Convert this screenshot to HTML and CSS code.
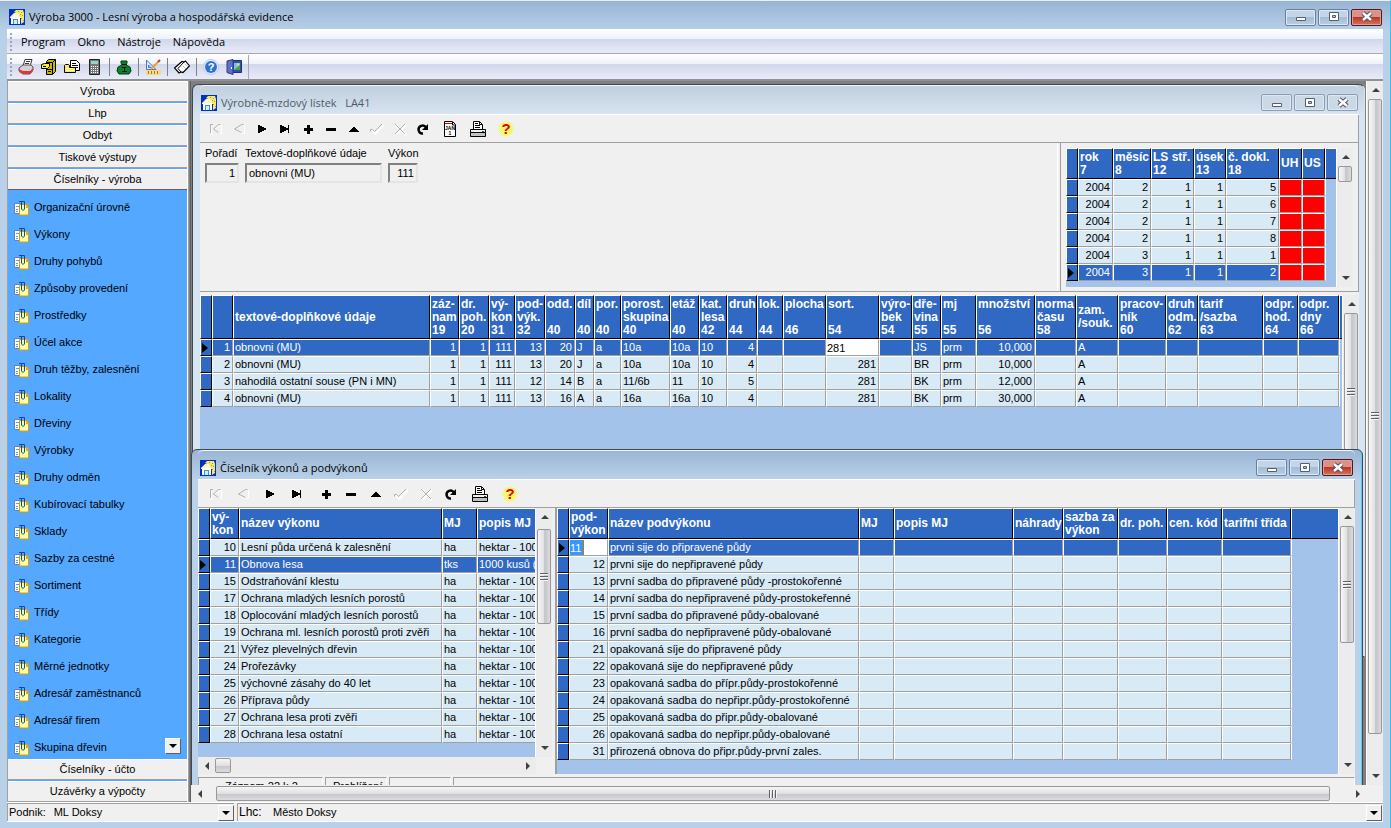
FILE: index.html
```html
<!DOCTYPE html>
<html lang="cs">

<head>
    <meta charset="UTF-8">
    <meta name="viewport" content="width=device-width, initial-scale=1.0">
    <title>Výroba 3000 - Lesní výroba a hospodářská evidence</title>

    <link rel="stylesheet" href="styles.css">
</head>

<body>

    <!-- Icon set -->
    <svg class="sprite" aria-hidden="true">
        <defs>
            <pattern id="dither" width="2" height="2" patternUnits="userSpaceOnUse"><path d="M0 0h1v1H0zM1 1h1v1H1z" fill="#ffff00"/></pattern>
        </defs>
        <symbol id="i-app" viewBox="0 0 16 16"><rect width="16" height="16" fill="#0030c0"/><path d="M5 3l2-2h7l1 3v9l-3 2V8L9 5z" fill="#f4e870"/><path d="M9 2h1v1H9zM12 3h1v1h-1zM13 6h1v1h-1zM12 9h1v1h-1zM14 11h1v1h-1zM11 5h1v1h-1z" fill="#b09820"/><path d="M1 8l4-4h4l3 4v1H1z" fill="#fff8c0"/><path d="M2 8h9v7H2z" fill="#fff"/><path d="M4 10h5v5H4z" fill="#4890c0"/><path d="M5 11h3v4H5z" fill="#c8f0f0"/></symbol>
        <symbol id="i-first" viewBox="0 0 16 16"><path d="M3.500 5v8h2M13.500 13V4L6 8.500z" fill="none" stroke="#fff"/><path d="M5 3.500H2.500V12M12.500 3.500h-2L5.500 8l5 3.500" fill="none" stroke="#b0b0b0"/></symbol>
        <symbol id="i-prev" viewBox="0 0 16 16"><path d="M13.500 4v8.500h-2L5 9" fill="none" stroke="#fff"/><path d="M12.500 3.500h-2L3.500 8l7 3.500" fill="none" stroke="#b0b0b0"/></symbol>
        <symbol id="i-next" viewBox="0 0 16 16"><path d="M4 4h2v1h2v1h2v1h2v2h-2v1H8v1H6v1H4z"/></symbol>
        <symbol id="i-last" viewBox="0 0 16 16"><path d="M3 4h2v1h2v1h2v1h2V4h1v8h-1V9H9v1H7v1H5v1H3z"/></symbol>
        <symbol id="i-add" viewBox="0 0 16 16"><path d="M7 4h3v3h3v3h-3v3H7v-3H4V7h3z"/></symbol>
        <symbol id="i-del" viewBox="0 0 16 16"><path d="M3 7h10v3H3z"/></symbol>
        <symbol id="i-edit" viewBox="0 0 16 16"><path d="M7 6h2v1h1v1h1v1h1v1h1v1H3v-1h1V9h1V8h1V7h1z"/></symbol>
        <symbol id="i-post" viewBox="0 0 16 16"><path d="M3 9l3 4 9-9" fill="none" stroke="#fff" stroke-width="2"/><path d="M1.500 10.500v-2h2l2 2L13 3" fill="none" stroke="#b0b0b0"/></symbol>
        <symbol id="i-cancel" viewBox="0 0 16 16"><path d="M4 4l10 10M14 4L4 14" stroke="#fff" stroke-width="2"/><path d="M3 3l10 10M13 3L3 13" stroke="#b0b0b0"/></symbol>
        <symbol id="i-refresh" viewBox="0 0 16 16"><path d="M11 6.500A4 4 0 1 0 8 12.500" fill="none" stroke="#000" stroke-width="2.400"/><path d="M13 3v6H7z"/></symbol>
        <symbol id="i-cal" viewBox="0 0 16 16"><path d="M2.500.5h8l3 3v12h-11z" fill="#fff" stroke="#000"/><path d="M3 2h8v1H3z" fill="#e00000"/><path d="M10.500 1v3h3" fill="none" stroke="#000"/><text class="month" x="8" y="9">JAN</text><text class="month" x="8" y="14">1</text></symbol>
        <symbol id="i-print" viewBox="0 0 16 16"><path d="M3.500 8.500v-8h6l3 3v5z" fill="#fff" stroke="#000"/><path d="M5 2.500h3M5 4.500h5M5 6.500h5M9.500 1v2.500H12" fill="none" stroke="#000"/><path d="M.5 8.500h15v3H.5z" fill="#f0f0f0" stroke="#000"/><path d="M.5 11.500h15v4H.5z" fill="#c0c0c0" stroke="#000"/><path d="M12 10.500h2" stroke="#008000"/></symbol>
        <symbol id="i-help" viewBox="0 0 16 16"><circle cx="8" cy="8" r="7.500" fill="url(#dither)"/><text class="question" x="8" y="13">?</text></symbol>
        <symbol id="i-paper" viewBox="0 0 16 16"><path d="M.5 3.500h8v10h-8z" fill="#fff" stroke="#6080c0"/><path d="M2 6.500h3M2 9.500h2M2 11.500h2" stroke="#5f9fe0"/><path d="M5.500 4.500h7l2 3v7.500h-9z" fill="#ffffa0" stroke="#d8a000"/><path d="M12 4h1l2 3v1h-3z" fill="#f0a800"/><path d="M5 1.500h5.500V9L9 10.500 7.500 9V2" fill="none" stroke="#1048a8"/></symbol>
        <symbol id="i-redprint" viewBox="0 0 16 16"><path d="M5 7l2-6.500h7l-2 7z" fill="#fff" stroke="#333"/><path d="M8 2.500h4M7 4.500h4" stroke="#333"/><path d="M1 9l4-3h8l2 2v3l-3 4H5l-4-3z" fill="#d8d0d0" stroke="#555"/><path d="M1 10l4 2h7l3-3v3l-3 3H5l-4-2z" fill="#e03838"/></symbol>
        <symbol id="i-cabinet" viewBox="0 0 16 16"><path d="M5.500 2.500l2-2h7v12l-3 3h-6z" fill="#c8b800" stroke="#000"/><path d="M5 3.500h6.500V15M6 10.500h5M7 12.500h3M11.500 3.500l3-3" fill="none" stroke="#000"/><path d="M.5 5.500l3-1h5v3l-2 2h-6z" fill="#ffec30" stroke="#000"/><path d="M2 7.500h3" stroke="#000"/></symbol>
        <symbol id="i-open" viewBox="0 0 16 16"><path d="M6.500 1.500h6l3 3v7h-9z" fill="#fff" stroke="#000"/><path d="M8 4.500h4M8 6.500h6M9 8.500h5" stroke="#000"/><path d="M.5 13.500v-7l1-1h3l1 1v2h6v5z" fill="#ffe850" stroke="#000"/><path d="M2 9.500h7M2 11.500h8" stroke="#fffbd0"/></symbol>
        <symbol id="i-calc" viewBox="0 0 16 16"><path d="M2.500.5h10v15h-10z" fill="#777" stroke="#222"/><path d="M4 2h7v3H4z" fill="#90d8c8"/><path d="M4 7h1v1H4zM6 7h1v1H6zM8 7h1v1H8zM10 7h1v1h-1zM4 9h1v1H4zM6 9h1v1H6zM8 9h1v1H8zM10 9h1v1h-1zM4 11h1v1H4zM6 11h1v1H6zM8 11h1v1H8zM10 11h1v1h-1zM4 13h1v1H4zM6 13h1v1H6zM8 13h1v1H8zM10 13h1v1h-1z" fill="#fff"/></symbol>
        <symbol id="i-money" viewBox="0 0 16 16"><path d="M5 2h6v2l-1 2 4 2 1 4-2 3H3l-2-3 1-4 4-2-1-2z" fill="#088030" stroke="#003810"/><path d="M6 5.500h5M6 8.500h4M8.500 8v4M6 12.500h5" stroke="#001800"/></symbol>
        <symbol id="i-ruler" viewBox="0 0 16 16"><path d="M1.500 1v9.500H11z" fill="#d8e8ff" stroke="#4878c8"/><path d="M3.500 6v2.500H6z" fill="#fff" stroke="#4878c8"/><path d="M1 11h15v5H1z" fill="#f8d880"/><path d="M3.500 12v3M6.500 12v3M9.500 12v3M12.500 12v3" stroke="#b07820"/><path d="M6 10l8-8" stroke="#f0a020" stroke-width="2"/><path d="M13 3l2-2" stroke="#c04040" stroke-width="2"/></symbol>
        <symbol id="i-book" viewBox="0 0 16 16"><path d="M.5 9L8 2.500l2 .5 1.500-1 4 5L9 13.500 7 13l-2 1z" fill="#fff" stroke="#000" stroke-width="1.200"/><path d="M10 3l-6 6.500 3 3.500" fill="none" stroke="#000"/><path d="M11 5l3 3M9 7l3 3" stroke="#c0c0c0"/></symbol>
        <symbol id="i-info" viewBox="0 0 16 16"><circle cx="8" cy="8" r="7.500" fill="#e4eefc" stroke="#b8cce8"/><circle cx="8" cy="8" r="6" fill="#3070d0"/><text class="info" x="8" y="12">?</text></symbol>
        <symbol id="i-exit" viewBox="0 0 16 16"><path d="M6 1.500h9.500v12H6z" fill="#3050b0" stroke="#203070"/><path d="M8 4h6v7H8z" fill="#70c0f0"/><path d="M8 11l6-5v5z" fill="#50a040"/><circle cx="12" cy="5.500" r="1.300" fill="#ffd040"/><path d="M1 2l6-1.500v15l-6-2z" fill="#6070c8" stroke="#303880"/><path d="M5 8h1v2H5z" fill="#fff"/></symbol>
        <symbol id="i-min" viewBox="0 0 16 16"><path d="M3.500 8.500h9v3h-9z" fill="#fff" stroke="#555f70"/></symbol>
        <symbol id="i-max" viewBox="0 0 16 16"><path d="M3.500 3.500h9v8h-9z" fill="#fff" stroke="#555f70"/><path d="M6.500 6.500h3v2h-3z" fill="#b0c4dc" stroke="#555f70"/></symbol>
        <symbol id="i-close" viewBox="0 0 16 16"><path d="M4 4l8 7M12 4l-8 7" stroke="#555060" stroke-width="4.500"/><path d="M4 4l8 7M12 4l-8 7" stroke="#fff" stroke-width="2.400"/></symbol>
    </svg>

    <div class="app">

        <header class="titlebar">
            <svg class="icon"><use href="#i-app"/></svg>
            <h1>Výroba 3000 - Lesní výroba a hospodářská evidence</h1>
            <div class="winbtns">
                <button type="button" aria-label="Minimalizovat"><svg class="icon"><use href="#i-min"/></svg></button>
                <button type="button" aria-label="Maximalizovat"><svg class="icon"><use href="#i-max"/></svg></button>
                <button type="button" class="close" aria-label="Zavřít"><svg class="icon"><use href="#i-close"/></svg></button>
            </div>
        </header>

        <nav class="band menu">
            <span class="grip"></span>
            <button type="button">Program</button>
            <button type="button">Okno</button>
            <button type="button">Nástroje</button>
            <button type="button">Nápověda</button>
        </nav>

        <div class="band tools">
            <span class="grip"></span>
            <div class="tool-group">
                <button type="button" aria-label="Tisk"><svg class="icon"><use href="#i-redprint"/></svg></button>
                <button type="button" aria-label="Archiv"><svg class="icon"><use href="#i-cabinet"/></svg></button>
                <button type="button" aria-label="Otevřít"><svg class="icon"><use href="#i-open"/></svg></button>
                <button type="button" aria-label="Kalkulačka"><svg class="icon"><use href="#i-calc"/></svg></button>
            </div>
            <div class="tool-group"><button type="button" aria-label="Mzdy"><svg class="icon"><use href="#i-money"/></svg></button></div>
            <div class="tool-group"><button type="button" aria-label="Nastavení"><svg class="icon"><use href="#i-ruler"/></svg></button></div>
            <div class="tool-group"><button type="button" aria-label="Kniha"><svg class="icon"><use href="#i-book"/></svg></button></div>
            <div class="tool-group">
                <button type="button" aria-label="Nápověda"><svg class="icon"><use href="#i-info"/></svg></button>
                <button type="button" aria-label="Konec"><svg class="icon"><use href="#i-exit"/></svg></button>
            </div>
        </div>

        <main class="work">

            <!-- Outlook style sidebar -->
            <aside class="sidebar">
                <button type="button" class="group">Výroba</button>
                <button type="button" class="group">Lhp</button>
                <button type="button" class="group">Odbyt</button>
                <button type="button" class="group">Tiskové výstupy</button>
                <button type="button" class="group open">Číselníky - výroba</button>
                <ul class="items">
                    <li><a href="#"><svg class="icon"><use href="#i-paper"/></svg>Organizační úrovně</a></li>
                    <li><a href="#"><svg class="icon"><use href="#i-paper"/></svg>Výkony</a></li>
                    <li><a href="#"><svg class="icon"><use href="#i-paper"/></svg>Druhy pohybů</a></li>
                    <li><a href="#"><svg class="icon"><use href="#i-paper"/></svg>Způsoby provedení</a></li>
                    <li><a href="#"><svg class="icon"><use href="#i-paper"/></svg>Prostředky</a></li>
                    <li><a href="#"><svg class="icon"><use href="#i-paper"/></svg>Účel akce</a></li>
                    <li><a href="#"><svg class="icon"><use href="#i-paper"/></svg>Druh těžby, zalesnění</a></li>
                    <li><a href="#"><svg class="icon"><use href="#i-paper"/></svg>Lokality</a></li>
                    <li><a href="#"><svg class="icon"><use href="#i-paper"/></svg>Dřeviny</a></li>
                    <li><a href="#"><svg class="icon"><use href="#i-paper"/></svg>Výrobky</a></li>
                    <li><a href="#"><svg class="icon"><use href="#i-paper"/></svg>Druhy odměn</a></li>
                    <li><a href="#"><svg class="icon"><use href="#i-paper"/></svg>Kubírovací tabulky</a></li>
                    <li><a href="#"><svg class="icon"><use href="#i-paper"/></svg>Sklady</a></li>
                    <li><a href="#"><svg class="icon"><use href="#i-paper"/></svg>Sazby za cestné</a></li>
                    <li><a href="#"><svg class="icon"><use href="#i-paper"/></svg>Sortiment</a></li>
                    <li><a href="#"><svg class="icon"><use href="#i-paper"/></svg>Třídy</a></li>
                    <li><a href="#"><svg class="icon"><use href="#i-paper"/></svg>Kategorie</a></li>
                    <li><a href="#"><svg class="icon"><use href="#i-paper"/></svg>Měrné jednotky</a></li>
                    <li><a href="#"><svg class="icon"><use href="#i-paper"/></svg>Adresář zaměstnanců</a></li>
                    <li><a href="#"><svg class="icon"><use href="#i-paper"/></svg>Adresář firem</a></li>
                    <li><a href="#"><svg class="icon"><use href="#i-paper"/></svg>Skupina dřevin</a>
                        <button type="button" class="drop" aria-label="Další položky"></button></li>
                </ul>
                <button type="button" class="group">Číselníky - účto</button>
                <button type="button" class="group">Uzávěrky a výpočty</button>
            </aside>
            <div class="splitter"></div>

            <div class="mdi">
                <div class="desktop">

                    <!-- Window: wage sheet -->
                    <section class="window sheet">
                        <header class="caption">
                            <svg class="icon"><use href="#i-app"/></svg>
                            <h2>Výrobně-mzdový lístek &nbsp; LA41</h2>
                            <div class="winbtns">
                                <button type="button" aria-label="Minimalizovat"><svg class="icon"><use href="#i-min"/></svg></button>
                                <button type="button" aria-label="Maximalizovat"><svg class="icon"><use href="#i-max"/></svg></button>
                                <button type="button" aria-label="Zavřít"><svg class="icon"><use href="#i-close"/></svg></button>
                            </div>
                        </header>
                        <div class="client">
                            <div class="navigator">
                                <div class="nav-move">
                                    <button type="button" aria-label="První" disabled><svg class="icon"><use href="#i-first"/></svg></button>
                                    <button type="button" aria-label="Předchozí" disabled><svg class="icon"><use href="#i-prev"/></svg></button>
                                    <button type="button" aria-label="Další"><svg class="icon"><use href="#i-next"/></svg></button>
                                    <button type="button" aria-label="Poslední"><svg class="icon"><use href="#i-last"/></svg></button>
                                </div>
                                <div class="nav-edit">
                                    <button type="button" aria-label="Přidat"><svg class="icon"><use href="#i-add"/></svg></button>
                                    <button type="button" aria-label="Smazat"><svg class="icon"><use href="#i-del"/></svg></button>
                                    <button type="button" aria-label="Upravit"><svg class="icon"><use href="#i-edit"/></svg></button>
                                    <button type="button" aria-label="Uložit" disabled><svg class="icon"><use href="#i-post"/></svg></button>
                                    <button type="button" aria-label="Zrušit" disabled><svg class="icon"><use href="#i-cancel"/></svg></button>
                                    <button type="button" aria-label="Obnovit"><svg class="icon"><use href="#i-refresh"/></svg></button>
                                </div>
                                <div class="nav-extra">
                                    <button type="button" aria-label="Kalendář"><svg class="icon"><use href="#i-cal"/></svg></button>
                                    <button type="button" aria-label="Tisk"><svg class="icon"><use href="#i-print"/></svg></button>
                                    <button type="button" aria-label="Nápověda"><svg class="icon"><use href="#i-help"/></svg></button>
                                </div>
                            </div>

                            <div class="top">
                                <form class="fields">
                                    <div class="field order">
                                        <label for="poradi">Pořadí</label>
                                        <input id="poradi" value="1" readonly>
                                    </div>
                                    <div class="field note">
                                        <label for="udaje">Textové-doplňkové údaje</label>
                                        <input id="udaje" value="obnovni (MU)" readonly>
                                    </div>
                                    <div class="field task">
                                        <label for="vykon">Výkon</label>
                                        <input id="vykon" value="111" readonly>
                                    </div>
                                </form>
                                <div class="docs">
                                    <div class="grid-area">
                                        <table class="grid doc-grid">
                                            <colgroup><col><col><col><col><col><col><col><col><col></colgroup>
                                            <thead><tr><th></th><th>rok<br>7</th><th>měsíc<br>8</th><th>LS stř.<br>12</th><th>úsek<br>13</th><th>č. dokl.<br>18</th><th>UH</th><th>US</th><th></th></tr></thead>
                                            <tbody>
                                                <tr><td></td><td>2004</td><td>2</td><td>1</td><td>1</td><td>5</td><td class="red"></td><td class="red"></td><td></td></tr>
                                                <tr><td></td><td>2004</td><td>2</td><td>1</td><td>1</td><td>6</td><td class="red"></td><td class="red"></td><td></td></tr>
                                                <tr><td></td><td>2004</td><td>2</td><td>1</td><td>1</td><td>7</td><td class="red"></td><td class="red"></td><td></td></tr>
                                                <tr><td></td><td>2004</td><td>2</td><td>1</td><td>1</td><td>8</td><td class="red"></td><td class="red"></td><td></td></tr>
                                                <tr><td></td><td>2004</td><td>3</td><td>1</td><td>1</td><td>1</td><td class="red"></td><td class="red"></td><td></td></tr>
                                                <tr class="sel"><td></td><td>2004</td><td>3</td><td>1</td><td>1</td><td>2</td><td class="red"></td><td class="red"></td><td></td></tr>
                                            </tbody>
                                        </table>
                                    </div>
                                    <div class="scroll v docs-scroll"><i class="arrow up"></i><span class="track"><span class="thumb"></span></span><i class="arrow down"></i></div>
                                </div>
                            </div>

                            <div class="bottom">
                                <div class="grid-area">
                                    <table class="grid main-grid">
                                        <colgroup><col><col><col><col><col><col><col><col><col><col><col><col><col><col><col><col><col><col><col><col><col><col><col><col><col><col><col><col><col></colgroup>
                                        <thead><tr>
                                            <th></th><th></th><th>textové-doplňkové údaje</th>
                                            <th>záz-<br>nam<br>19</th><th>dr.<br>poh.<br>20</th><th>vý-<br>kon<br>31</th><th>pod-<br>výk.<br>32</th>
                                            <th>odd.<br><br>40</th><th>díl<br><br>40</th><th>por.<br><br>40</th><th>porost.<br>skupina<br>40</th>
                                            <th>etáž<br><br>40</th><th>kat.<br>lesa<br>42</th><th>druh<br><br>44</th><th>lok.<br><br>44</th>
                                            <th>plocha<br><br>46</th><th>sort.<br><br>54</th><th>výro-<br>bek<br>54</th><th>dře-<br>vina<br>55</th>
                                            <th>mj<br><br>55</th><th>množství<br><br>56</th><th>norma<br>času<br>58</th><th>zam.<br>/souk.</th>
                                            <th>pracov-<br>ník<br>60</th><th>druh<br>odm.<br>62</th><th>tarif<br>/sazba<br>63</th>
                                            <th>odpr.<br>hod.<br>64</th><th>odpr.<br>dny<br>66</th><th></th>
                                        </tr></thead>
                                        <tbody>
                                            <tr class="sel"><td></td><td class="n">1</td><td>obnovni (MU)</td><td class="n">1</td><td class="n">1</td><td class="n">111</td><td class="n">13</td><td class="n">20</td><td>J</td><td>a</td><td>10a</td><td>10a</td><td>10</td><td class="n">4</td><td></td><td></td><td class="edit"><input value="281" aria-label="Sortiment"></td><td></td><td>JS</td><td>prm</td><td class="n">10,000</td><td></td><td>A</td><td></td><td></td><td></td><td></td><td></td><td></td></tr>
                                            <tr><td></td><td class="n">2</td><td>obnovni (MU)</td><td class="n">1</td><td class="n">1</td><td class="n">111</td><td class="n">13</td><td class="n">20</td><td>J</td><td>a</td><td>10a</td><td>10a</td><td>10</td><td class="n">4</td><td></td><td></td><td class="n">281</td><td></td><td>BR</td><td>prm</td><td class="n">10,000</td><td></td><td>A</td><td></td><td></td><td></td><td></td><td></td><td></td></tr>
                                            <tr><td></td><td class="n">3</td><td>nahodilá ostatní souse (PN i MN)</td><td class="n">1</td><td class="n">1</td><td class="n">111</td><td class="n">12</td><td class="n">14</td><td>B</td><td>a</td><td>11/6b</td><td>11</td><td>10</td><td class="n">5</td><td></td><td></td><td class="n">281</td><td></td><td>BK</td><td>prm</td><td class="n">12,000</td><td></td><td>A</td><td></td><td></td><td></td><td></td><td></td><td></td></tr>
                                            <tr><td></td><td class="n">4</td><td>obnovni (MU)</td><td class="n">1</td><td class="n">1</td><td class="n">111</td><td class="n">13</td><td class="n">16</td><td>A</td><td>a</td><td>16a</td><td>16a</td><td>10</td><td class="n">4</td><td></td><td></td><td class="n">281</td><td></td><td>BK</td><td>prm</td><td class="n">30,000</td><td></td><td>A</td><td></td><td></td><td></td><td></td><td></td><td></td></tr>
                                        </tbody>
                                    </table>
                                </div>
                                <div class="scroll v main-scroll"><i class="arrow up"></i><span class="track"><span class="thumb grooved"></span></span><i class="arrow down"></i></div>
                            </div>
                        </div>
                    </section>

                    <!-- Window: code list -->
                    <section class="window codes">
                        <header class="caption">
                            <svg class="icon"><use href="#i-app"/></svg>
                            <h2>Číselník výkonů a podvýkonů</h2>
                            <div class="winbtns">
                                <button type="button" aria-label="Minimalizovat"><svg class="icon"><use href="#i-min"/></svg></button>
                                <button type="button" aria-label="Maximalizovat"><svg class="icon"><use href="#i-max"/></svg></button>
                                <button type="button" class="close" aria-label="Zavřít"><svg class="icon"><use href="#i-close"/></svg></button>
                            </div>
                        </header>
                        <div class="client">
                            <div class="navigator">
                                <div class="nav-move">
                                    <button type="button" aria-label="První" disabled><svg class="icon"><use href="#i-first"/></svg></button>
                                    <button type="button" aria-label="Předchozí" disabled><svg class="icon"><use href="#i-prev"/></svg></button>
                                    <button type="button" aria-label="Další"><svg class="icon"><use href="#i-next"/></svg></button>
                                    <button type="button" aria-label="Poslední"><svg class="icon"><use href="#i-last"/></svg></button>
                                </div>
                                <div class="nav-edit">
                                    <button type="button" aria-label="Přidat"><svg class="icon"><use href="#i-add"/></svg></button>
                                    <button type="button" aria-label="Smazat"><svg class="icon"><use href="#i-del"/></svg></button>
                                    <button type="button" aria-label="Upravit"><svg class="icon"><use href="#i-edit"/></svg></button>
                                    <button type="button" aria-label="Uložit" disabled><svg class="icon"><use href="#i-post"/></svg></button>
                                    <button type="button" aria-label="Zrušit" disabled><svg class="icon"><use href="#i-cancel"/></svg></button>
                                    <button type="button" aria-label="Obnovit"><svg class="icon"><use href="#i-refresh"/></svg></button>
                                </div>
                                <div class="nav-extra">
                                    <button type="button" aria-label="Tisk"><svg class="icon"><use href="#i-print"/></svg></button>
                                    <button type="button" aria-label="Nápověda"><svg class="icon"><use href="#i-help"/></svg></button>
                                </div>
                            </div>

                            <div class="panes">
                                <div class="pane left">
                                    <div class="pane-row">
                                        <div class="grid-area">
                                            <table class="grid task-grid">
                                                <colgroup><col><col><col><col><col></colgroup>
                                                <thead><tr><th></th><th>vý-<br>kon</th><th>název výkonu</th><th>MJ</th><th>popis MJ</th></tr></thead>
                                                <tbody>
                                                    <tr><td></td><td class="n">10</td><td>Lesní půda určená k zalesnění</td><td>ha</td><td>hektar - 100</td></tr>
                                                    <tr class="sel"><td></td><td class="n">11</td><td>Obnova lesa</td><td>tks</td><td>1000 kusů (</td></tr>
                                                    <tr><td></td><td class="n">15</td><td>Odstraňování klestu</td><td>ha</td><td>hektar - 100</td></tr>
                                                    <tr><td></td><td class="n">17</td><td>Ochrana mladých lesních porostů</td><td>ha</td><td>hektar - 100</td></tr>
                                                    <tr><td></td><td class="n">18</td><td>Oplocování mladých lesních porostů</td><td>ha</td><td>hektar - 100</td></tr>
                                                    <tr><td></td><td class="n">19</td><td>Ochrana ml. lesních porostů proti zvěři</td><td>ha</td><td>hektar - 100</td></tr>
                                                    <tr><td></td><td class="n">21</td><td>Výřez plevelných dřevin</td><td>ha</td><td>hektar - 100</td></tr>
                                                    <tr><td></td><td class="n">24</td><td>Prořezávky</td><td>ha</td><td>hektar - 100</td></tr>
                                                    <tr><td></td><td class="n">25</td><td>výchovné zásahy do 40 let</td><td>ha</td><td>hektar - 100</td></tr>
                                                    <tr><td></td><td class="n">26</td><td>Příprava půdy</td><td>ha</td><td>hektar - 100</td></tr>
                                                    <tr><td></td><td class="n">27</td><td>Ochrana lesa proti zvěři</td><td>ha</td><td>hektar - 100</td></tr>
                                                    <tr><td></td><td class="n">28</td><td>Ochrana lesa ostatní</td><td>ha</td><td>hektar - 100</td></tr>
                                                </tbody>
                                            </table>
                                        </div>
                                        <div class="scroll v task-scroll"><i class="arrow up"></i><span class="track"><span class="thumb grooved"></span></span><i class="arrow down"></i></div>
                                    </div>
                                    <div class="scroll h"><i class="arrow prev"></i><span class="track"><span class="thumb"></span></span><i class="arrow next"></i></div>
                                </div>
                                <div class="pane right">
                                    <div class="grid-area">
                                        <table class="grid sub-grid">
                                            <colgroup><col><col><col><col><col><col><col><col><col><col><col></colgroup>
                                            <thead><tr><th></th><th>pod-<br>výkon</th><th>název podvýkonu</th><th>MJ</th><th>popis MJ</th><th>náhrady</th><th>sazba za<br>výkon</th><th>dr. poh.</th><th>cen. kód</th><th>tarifní třída</th><th></th></tr></thead>
                                            <tbody>
                                                <tr class="sel"><td></td><td class="edit"><input class="marked" value="11" aria-label="Podvýkon"></td><td>prvni sije do připravené půdy</td><td></td><td></td><td></td><td></td><td></td><td></td><td></td><td></td></tr>
                                                <tr><td></td><td class="n">12</td><td>prvni sije do nepřipravené půdy</td><td></td><td></td><td></td><td></td><td></td><td></td><td></td><td></td></tr>
                                                <tr><td></td><td class="n">13</td><td>první sadba do připravené půdy -prostokořenné</td><td></td><td></td><td></td><td></td><td></td><td></td><td></td><td></td></tr>
                                                <tr><td></td><td class="n">14</td><td>první sadba do nepřipravené půdy-prostokeřenné</td><td></td><td></td><td></td><td></td><td></td><td></td><td></td><td></td></tr>
                                                <tr><td></td><td class="n">15</td><td>první sadba do připravené půdy-obalované</td><td></td><td></td><td></td><td></td><td></td><td></td><td></td><td></td></tr>
                                                <tr><td></td><td class="n">16</td><td>první sadba do nepřipravené půdy-obalované</td><td></td><td></td><td></td><td></td><td></td><td></td><td></td><td></td></tr>
                                                <tr><td></td><td class="n">21</td><td>opakovaná síje do připravené půdy</td><td></td><td></td><td></td><td></td><td></td><td></td><td></td><td></td></tr>
                                                <tr><td></td><td class="n">22</td><td>opakovaná sije do nepřipravené půdy</td><td></td><td></td><td></td><td></td><td></td><td></td><td></td><td></td></tr>
                                                <tr><td></td><td class="n">23</td><td>opakovaná sadba do přípr.půdy-prostokořenné</td><td></td><td></td><td></td><td></td><td></td><td></td><td></td><td></td></tr>
                                                <tr><td></td><td class="n">24</td><td>opakovaná sadba do nepřipr.půdy-prostokořenné</td><td></td><td></td><td></td><td></td><td></td><td></td><td></td><td></td></tr>
                                                <tr><td></td><td class="n">25</td><td>opakovaná sadba do připr.půdy-obalované</td><td></td><td></td><td></td><td></td><td></td><td></td><td></td><td></td></tr>
                                                <tr><td></td><td class="n">26</td><td>opakovaná sadba do nepřipr.půdy-obalované</td><td></td><td></td><td></td><td></td><td></td><td></td><td></td><td></td></tr>
                                                <tr><td></td><td class="n">31</td><td>přirozená obnova do připr.půdy-první zales.</td><td></td><td></td><td></td><td></td><td></td><td></td><td></td><td></td></tr>
                                            </tbody>
                                        </table>
                                    </div>
                                    <div class="scroll v sub-scroll"><i class="arrow up"></i><span class="track"><span class="thumb grooved"></span></span><i class="arrow down"></i></div>
                                </div>
                            </div>

                            <footer class="panels"><span>Záznam 22 k 2</span><span>Prohlížení</span><span></span><span></span></footer>
                        </div>
                    </section>
                </div>

                <div class="scroll v desk-v"><i class="arrow up"></i><span class="track"><span class="thumb grooved"></span></span><i class="arrow down"></i></div>
                <div class="scroll h desk-h"><i class="arrow prev"></i><span class="track"><span class="thumb grooved"></span></span><i class="arrow next"></i></div>
                <div class="corner"></div>
            </div>
        </main>

        <footer class="status">
            <div class="combo company">
                <label for="podnik">Podnik:</label>
                <select id="podnik"><option>ML Doksy</option></select>
                <span class="drop"></span>
            </div>
            <div class="combo plan">
                <label for="lhc">Lhc:</label>
                <select id="lhc"><option>Město Doksy</option></select>
                <span class="drop"></span>
            </div>
        </footer>
    </div>

</body>

</html>
```

FILE: styles.css
```css
* {
    margin: 0;
    padding: 0;
    box-sizing: border-box;
}

body {
    font: 11px/13px "Liberation Sans", Arial, sans-serif;
    color: #000;
    background: #bad1ea;
    overflow: hidden;
}

button, input, select {
    font: inherit;
    color: inherit;
    border: 0;
    border-radius: 0;
    background: none;
}

.sprite {
    position: absolute;
    width: 0;
    height: 0;
}

.icon {
    display: block;
    flex: none;
    width: 16px;
    height: 16px;
}

.month, .question, .info {
    text-anchor: middle;
    font: bold 5px "Liberation Sans", sans-serif;
}

.question {
    font-size: 15px;
    fill: #e00000;
}

.info {
    font-size: 11px;
    fill: #fff;
}

/* Application frame */
.app {
    height: 100vh;
    display: flex;
    flex-direction: column;
    padding: 0 7px 6px;
    border-right: 1px solid #30c8f0;
    border-top: 1px solid #e8f0f8;
    background: linear-gradient(#98b4d2, #b9d0e9 30px);
}

.titlebar, .caption {
    display: flex;
    align-items: center;
    flex: none;
}

.titlebar {
    height: 28px;
    padding: 4px 1px 0 2px;
}

h1, h2 {
    flex: 1;
    padding-left: 4px;
    font: 11px/16px "Open Sans", sans-serif;
}

.winbtns {
    display: flex;
    gap: 2px;
}

.winbtns button {
    display: flex;
    align-items: center;
    justify-content: center;
    width: 31px;
    height: 17px;
    border: 1px solid #6680a0;
    border-radius: 2px;
    box-shadow: inset 0 0 0 1px #dce8f4;
    background: linear-gradient(#c4d5e8 50%, #a4bcd6 50%, #b8cee6);
}

.winbtns .close {
    border-color: #501820;
    box-shadow: inset 0 0 0 1px #e0a098;
    background: linear-gradient(#dc9088 45%, #b83020 45%, #d07860);
}

/* Menu and tool bands */
.band {
    display: flex;
    align-items: center;
    flex: none;
    padding-left: 3px;
    border-top: 1px solid #fff;
    border-bottom: 1px solid #a8a8b0;
    background: linear-gradient(#fff, #eef1f9 9px, #d1d7eb 9px, #e8ebf8);
}

.menu {
    height: 25px;
    font: 11px/16px "Open Sans", sans-serif;
}

.menu button {
    padding: 0 6px;
}

.tools {
    height: 27px;
    border-bottom: 2px solid #909098;
}

.grip {
    width: 2px;
    height: 18px;
    margin-right: 3px;
    background: repeating-linear-gradient(#a0a4b0 0 2px, transparent 2px 4px);
}

.tool-group {
    display: flex;
    height: 18px;
    padding-right: 2px;
    border-right: 1px solid #808088;
}

.tool-group:last-child {
    height: 24px;
    align-items: center;
    border-color: #a8a8b0;
}

.tool-group button {
    width: 23px;
    padding: 1px 3px;
}

.tool-group + .tool-group {
    padding-left: 3px;
}

/* Sidebar */
.work {
    flex: 1;
    display: flex;
    min-height: 0;
}

.sidebar {
    flex: none;
    width: 181px;
    display: flex;
    flex-direction: column;
    border-left: 1px solid #a0a0a0;
    border-right: 1px solid #fff;
    background: #54a8ff;
}

.group {
    flex: none;
    height: 21px;
    margin-bottom: 1px;
    border-top: 1px solid #fff;
    border-bottom: 1px solid #a0a0a0;
    background: #f0f0f0;
}

.group.open {
    border-bottom: 1px solid #606060;
}

.group:last-child {
    margin-bottom: 0;
}

.items {
    flex: 1;
    min-height: 0;
    overflow: hidden;
    padding-top: 3px;
    list-style: none;
}

.items li {
    position: relative;
    height: 27px;
}

.items a {
    display: flex;
    align-items: center;
    gap: 4px;
    height: 27px;
    padding-left: 6px;
    color: #000;
    text-decoration: none;
}

.drop {
    display: flex;
    align-items: center;
    justify-content: center;
    width: 16px;
    height: 16px;
    border: 1px solid;
    border-color: #fff #606060 #606060 #fff;
    background: #f0f0f0;
}

.drop::after {
    content: "";
    border: 4px solid transparent;
    border-top-color: #000;
    border-bottom: 0;
}

.items .drop {
    position: absolute;
    right: 6px;
    top: 4px;
}

.splitter {
    flex: none;
    width: 3px;
    border-left: 1px solid #a0a0a0;
    border-right: 1px solid #606060;
    background: #808080;
}

/* MDI area */
.mdi {
    flex: 1;
    min-width: 0;
    display: grid;
    grid-template: minmax(0, 1fr) 17px / minmax(0, 1fr) 17px;
}

.desktop {
    position: relative;
    overflow: hidden;
    background: #808080;
}

.corner {
    background: #f0f0f0;
}

.window {
    position: absolute;
    display: flex;
    flex-direction: column;
    border: 1px solid #404850;
    border-radius: 6px 6px 0 0;
}

.caption {
    border-top: 1px solid #f0f6fc;
    border-radius: 5px 5px 0 0;
}

.client {
    flex: 1;
    min-height: 0;
    display: flex;
    flex-direction: column;
    border-top: 1px solid #fff;
    background: #f0f0f0;
}

.sheet {
    left: 1px;
    right: 1px;
    top: 3px;
    height: 573px;
    padding: 0 5px 5px 7px;
    background: linear-gradient(#c0cedd, #d7e4f2 30px);
    border-right-color: #d7e4f2;
}

.sheet .caption {
    height: 29px;
    padding: 5px 1px 0 1px;
    color: #505a66;
}

.sheet .winbtns button {
    border-color: #8c9cb4;
    background: #cbd8e6;
}

.codes {
    left: 0;
    right: 3px;
    top: 368px;
    height: 380px;
    padding: 0 7px 7px 6px;
    background: linear-gradient(#9ab5d3, #b9d1ea 30px);
    box-shadow: inset -1px 0 #50d0f0;
}

.codes .caption {
    height: 29px;
    padding: 5px 2px 0 2px;
}

/* Record navigator */
.navigator {
    display: flex;
    align-items: center;
    flex: none;
    height: 28px;
    padding-left: 4px;
    border-bottom: 1px solid #a0a0a0;
    border-right: 1px solid #a0a0a0;
}

.navigator button {
    display: flex;
    justify-content: center;
    width: 23px;
}

.nav-move, .nav-edit, .nav-extra {
    display: flex;
}

.nav-extra {
    gap: 5px;
    padding-left: 4px;
}

.codes .navigator button {
    width: 25px;
}

.codes .nav-move button {
    width: 27px;
}

.codes .nav-edit {
    padding-left: 3px;
}

/* Form above the list */
.top {
    display: flex;
    flex: none;
    height: 149px;
    border-bottom: 1px solid #a0a0a0;
}

.fields {
    flex: 1;
    display: flex;
    gap: 6px;
    padding: 4px 0 0 5px;
    border-right: 1px solid #fff;
}

.field {
    display: flex;
    flex-direction: column;
    gap: 3px;
    white-space: nowrap;
}

.field input {
    width: 100%;
    height: 20px;
    padding: 0 2px;
    border: 2px solid;
    border-color: #808080 #e4e4e4 #e4e4e4 #808080;
    background: #f0f0f0;
}

.order {
    width: 34px;
}

.note {
    width: 137px;
}

.task {
    width: 30px;
}

.order input, .task input {
    text-align: right;
}

.docs {
    display: flex;
    width: 299px;
    margin-left: 2px;
    padding: 5px 5px 4px;
    border-left: 1px solid #a0a0a0;
    border-right: 1px solid #a0a0a0;
}

.bottom {
    flex: 1;
    min-height: 0;
    display: flex;
    padding-top: 3px;
}

/* Data grids */
.grid-area {
    flex: 1;
    min-width: 0;
    overflow: hidden;
    background: #a4c3eb;
}

.grid {
    width: 100%;
    table-layout: fixed;
    border-collapse: separate;
    border-spacing: 0;
}

.grid th {
    height: 31px;
    padding: 0 0 0 1px;
    border: 1px solid #fff;
    border-right-color: #000;
    border-bottom-color: #000;
    background: #3069c4;
    color: #fff;
    font-size: 12px;
    text-align: left;
    white-space: nowrap;
}

.main-grid th {
    height: 44px;
}

.grid td {
    height: 17px;
    padding: 0 2px 0 1px;
    border: 1px solid #fff;
    border-right-color: #a0a0a0;
    border-bottom-color: #a0a0a0;
    background: #d8eaf6;
    white-space: nowrap;
    overflow: hidden;
}

.grid td.n, .doc-grid td {
    text-align: right;
}

.grid .sel td {
    background: #3069c4;
    color: #fff;
}

.grid tr td:first-child {
    border-right-color: #000;
    border-bottom-color: #000;
    background: #3069c4;
}

.sel td:first-child::before {
    content: "";
    display: block;
    width: 0;
    border: 5px solid transparent;
    border-left: 6px solid #000;
    border-right: 0;
}

.grid tr td.red {
    background: #f00;
}

.doc-grid th:last-child, .main-grid th:last-child, .sub-grid th:last-child {
    border-right: 0;
}

.doc-grid tr td:last-child, .main-grid tr td:last-child, .sub-grid tr td:last-child {
    border-color: transparent transparent transparent #fff;
    background: none;
}

.grid .sel td.edit {
    padding: 0;
    background: #fff;
    color: #000;
}

.edit input {
    display: block;
    width: 100%;
    height: 15px;
}

.edit input.marked {
    width: 14px;
    border-right: 1px solid #d07000;
    background: #39f;
    color: #fff;
}

.doc-grid col:nth-child(1) { width: 12px; }
.doc-grid col:nth-child(2) { width: 35px; }
.doc-grid col:nth-child(3) { width: 38px; }
.doc-grid col:nth-child(4) { width: 43px; }
.doc-grid col:nth-child(5) { width: 32px; }
.doc-grid col:nth-child(6) { width: 53px; }
.doc-grid col:nth-child(7) { width: 23px; }
.doc-grid col:nth-child(8) { width: 23px; }

.main-grid col:nth-child(1) { width: 12px; }
.main-grid col:nth-child(2) { width: 21px; }
.main-grid col:nth-child(3) { width: 197px; }
.main-grid col:nth-child(4) { width: 29px; }
.main-grid col:nth-child(5) { width: 30px; }
.main-grid col:nth-child(6) { width: 26px; }
.main-grid col:nth-child(7) { width: 30px; }
.main-grid col:nth-child(8) { width: 30px; }
.main-grid col:nth-child(9) { width: 19px; }
.main-grid col:nth-child(10) { width: 27px; }
.main-grid col:nth-child(11) { width: 49px; }
.main-grid col:nth-child(12) { width: 29px; }
.main-grid col:nth-child(13) { width: 28px; }
.main-grid col:nth-child(14) { width: 30px; }
.main-grid col:nth-child(15) { width: 26px; }
.main-grid col:nth-child(16) { width: 43px; }
.main-grid col:nth-child(17) { width: 53px; }
.main-grid col:nth-child(18) { width: 33px; }
.main-grid col:nth-child(19) { width: 29px; }
.main-grid col:nth-child(20) { width: 35px; }
.main-grid col:nth-child(21) { width: 59px; }
.main-grid col:nth-child(22) { width: 41px; }
.main-grid col:nth-child(23) { width: 42px; }
.main-grid col:nth-child(24) { width: 48px; }
.main-grid col:nth-child(25) { width: 32px; }
.main-grid col:nth-child(26) { width: 65px; }
.main-grid col:nth-child(27) { width: 35px; }
.main-grid col:nth-child(28) { width: 41px; }

.task-grid col:nth-child(1) { width: 12px; }
.task-grid col:nth-child(2) { width: 29px; }
.task-grid col:nth-child(3) { width: 203px; }
.task-grid col:nth-child(4) { width: 35px; }

.task-grid {
    width: 400px;
}

.sub-grid col:nth-child(1) { width: 12px; }
.sub-grid col:nth-child(2) { width: 39px; }
.sub-grid col:nth-child(3) { width: 251px; }
.sub-grid col:nth-child(4) { width: 35px; }
.sub-grid col:nth-child(5) { width: 119px; }
.sub-grid col:nth-child(6) { width: 50px; }
.sub-grid col:nth-child(7) { width: 55px; }
.sub-grid col:nth-child(8) { width: 49px; }
.sub-grid col:nth-child(9) { width: 55px; }
.sub-grid col:nth-child(10) { width: 69px; }

/* Code list panes */
.panes {
    display: flex;
    flex: none;
    height: 266px;
}

.pane {
    display: flex;
    min-width: 0;
}

.left {
    flex-direction: column;
    flex: none;
    width: 354px;
}

.left .h {
    margin-right: 16px;
}

.pane-row {
    flex: 1;
    display: flex;
    min-height: 0;
}

.right {
    flex: 1;
    margin-left: 3px;
    border-left: 2px solid #a0a0a0;
}

.panels {
    flex: 1;
    display: flex;
    gap: 2px;
    margin-top: 3px;
}

.panels span {
    flex: none;
    width: 62px;
    padding: 2px 7px;
    border-top: 1px solid #a0a0a0;
    border-left: 1px solid #a0a0a0;
    border-right: 1px solid #fff;
    white-space: nowrap;
}

.panels span:first-child {
    width: 125px;
    padding-left: 26px;
}

.panels span:last-child {
    flex: 1;
}

/* Scroll bars */
.scroll {
    display: flex;
    background: #ececec;
}

.v {
    flex: none;
    flex-direction: column;
    width: 17px;
    padding: 0 1px;
    border-left: 1px solid #fff;
}

.h {
    height: 17px;
    padding: 1px 0;
}

.track {
    flex: 1;
    display: flex;
    flex-direction: inherit;
    min-height: 0;
}

.arrow {
    display: flex;
    align-items: center;
    justify-content: center;
    flex: none;
    width: 15px;
    height: 18px;
}

.h .arrow {
    width: 17px;
    height: 15px;
}

.arrow::after {
    content: "";
    border: 4px solid transparent;
}

.up::after {
    border-top: 0;
    border-bottom-color: #404040;
}

.down::after {
    border-bottom: 0;
    border-top-color: #404040;
}

.prev::after {
    border-left: 0;
    border-right-color: #404040;
}

.next::after {
    border-right: 0;
    border-left-color: #404040;
}

.thumb {
    flex: none;
    display: flex;
    align-items: center;
    justify-content: center;
    height: 16px;
    border: 1px solid #989898;
    border-radius: 2px;
    background: linear-gradient(90deg, #f6f6f6, #e0e0e4 50%, #c4c4c8 55%, #dcdce0);
}

.h .thumb {
    width: 16px;
    height: 15px;
    background: linear-gradient(#f6f6f6, #e0e0e4 50%, #c8c8cc 55%, #dcdce0);
}

.grooved::after {
    content: "";
    width: 8px;
    height: 8px;
    background: repeating-linear-gradient(#606068 0 1px, #f4f4f4 1px 2px, transparent 2px 3px);
}

.h .grooved::after {
    background: repeating-linear-gradient(90deg, #606068 0 1px, #f4f4f4 1px 2px, transparent 2px 3px);
}

.main-scroll .thumb {
    height: 157px;
}

.task-scroll .track {
    padding-top: 3px;
}

.task-scroll .thumb {
    height: 95px;
}

.sub-scroll .thumb {
    height: 117px;
}

.desk-v .thumb {
    height: 95%;
}

.desk-h {
    background: #f0f0f0;
}

.desk-h .track {
    padding: 0 8px;
}

.desk-h .thumb {
    width: 99%;
}

/* Status bar */
.status {
    display: flex;
    gap: 3px;
    flex: none;
    height: 20px;
    border-top: 1px solid #fff;
    border-bottom: 1px solid #fff;
    background: #f0f0f0;
}

.combo {
    display: flex;
    align-items: center;
    gap: 8px;
    border-top: 1px solid #a0a0a0;
    border-left: 1px solid #a0a0a0;
    padding-left: 1px;
}

.combo select {
    flex: 1;
    appearance: none;
}

.company {
    width: 227px;
}

.plan {
    flex: 1;
    padding-right: 1px;
}

.plan label {
    width: 26px;
    font-size: 12px;
}
```
